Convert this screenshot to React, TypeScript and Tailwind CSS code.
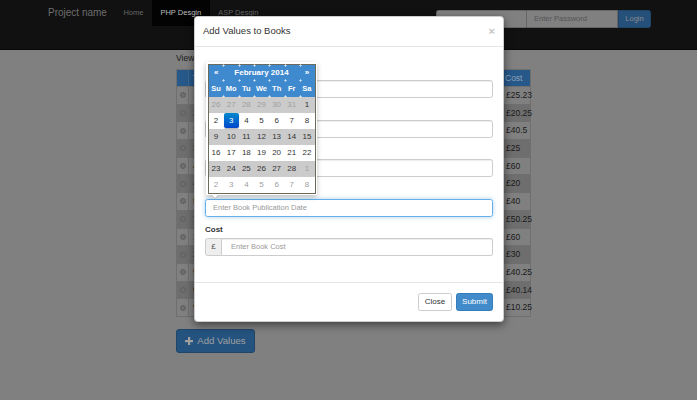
import { Fragment } from 'react'

const costs = ['£25.23', '£20.25', '£40.5', '£25', '£60', '£20', '£40', '£50.25', '£60', '£30', '£40.25', '£40.14', '£10.25']
const ids = ['1', '2', '3', '3', '4', '4', '5', '7', '1', '2', '9', '9', '9']

const dows = ['Su', 'Mo', 'Tu', 'We', 'Th', 'Fr', 'Sa']

// muted = day outside February
const weeks: [number, boolean][][] = [
    [[26, true], [27, true], [28, true], [29, true], [30, true], [31, true], [1, false]],
    [[2, false], [3, false], [4, false], [5, false], [6, false], [7, false], [8, false]],
    [[9, false], [10, false], [11, false], [12, false], [13, false], [14, false], [15, false]],
    [[16, false], [17, false], [18, false], [19, false], [20, false], [21, false], [22, false]],
    [[23, false], [24, false], [25, false], [26, false], [27, false], [28, false], [1, true]],
    [[2, true], [3, true], [4, true], [5, true], [6, true], [7, true], [8, true]],
]

const fields = [
    { label: 'Title', placeholder: 'Enter Book Title' },
    { label: 'Author', placeholder: 'Enter Author Name' },
    { label: 'Genre', placeholder: 'Enter Book Genre' },
    { label: 'Published', placeholder: 'Enter Book Publication Date', focus: true },
]

function PlusGlyph() {
    return (
        <svg width="8" height="8" viewBox="0 0 8 8" className="shrink-0">
            <rect x="3" y="0" width="2.2" height="8" fill="currentColor" />
            <rect x="0" y="3" width="8" height="2.2" fill="currentColor" />
        </svg>
    )
}

function Ticks({ top }: { top: number }) {
    // faint marks where the header cells meet
    return (
        <div className="absolute left-0 right-0 pointer-events-none" style={{ top }}>
            {[1, 2, 3, 4, 5, 6].map(i => (
                <span key={i} className="absolute w-[3px] h-[3px]" style={{ left: i * 15.3 - 1.5 }}>
                    <span className="absolute left-[1px] top-0 w-px h-[3px] bg-white/50" />
                    <span className="absolute left-0 top-[1px] w-[3px] h-px bg-white/50" />
                </span>
            ))}
        </div>
    )
}

function DatePicker() {
    return (
        <div className="absolute left-[206px] top-[62px] bg-white p-[1.5px] shadow-[0_2px_5px_rgba(0,0,0,0.25)]">
            <div className="relative w-[108px] border border-[#6c6a5c] bg-white">
                <div className="relative bg-[#3f89cf] text-white font-bold">
                    <div className="flex items-center h-[16px] text-[8px]">
                        <span className="w-[15.3px] text-center">«</span>
                        <span className="flex-1 text-center">February 2014</span>
                        <span className="w-[15.3px] text-center">»</span>
                    </div>
                    <div className="grid grid-cols-7 h-[16px] items-center text-[7.5px]">
                        {dows.map(d => (
                            <span key={d} className="text-center">{d}</span>
                        ))}
                    </div>
                    <Ticks top={-1} />
                    <Ticks top={14.5} />
                    <Ticks top={30} />
                </div>
                {weeks.map((w, wi) => (
                    <div key={wi} className={`grid grid-cols-7 h-[16px] items-center text-[8px] ${wi % 2 === 0 ? 'bg-[#cbcbcb]' : 'bg-white'}`}>
                        {w.map(([d, muted], di) => (
                            <span key={di} className="flex justify-center">
                                {wi === 1 && d === 3 ? (
                                    <span className="w-[16px] h-[15px] leading-[15px] text-center rounded-[2px] text-white bg-gradient-to-b from-[#0088cc] to-[#0044cc] shadow-[0_1px_1px_rgba(0,0,0,0.3)]">
                                        {d}
                                    </span>
                                ) : (
                                    <span className={muted ? 'text-[#a0a0a0]' : 'text-[#333]'}>{d}</span>
                                )}
                            </span>
                        ))}
                    </div>
                ))}
            </div>
            {/* caret pointing at the date input */}
            <span className="absolute left-[5px] -bottom-[4px] w-0 h-0 border-x-[4px] border-x-transparent border-t-[4px] border-t-[#bbb]" />
            <span className="absolute left-[6px] -bottom-[3px] w-0 h-0 border-x-[3px] border-x-transparent border-t-[3px] border-t-white" />
        </div>
    )
}

export default function App() {
    // page behind the modal is painted in its dimmed (backdrop) colours
    return (
        <div className="relative w-[697px] h-[400px] overflow-hidden bg-[#808080] font-['Liberation_Sans',Arial,sans-serif] text-[#1a1a1a]">
            {/* Navbar */}
            <nav className="h-[50px] bg-[#111] border-b border-[#080808] flex items-start pl-[40px] pr-[46px]">
                <span className="h-[26px] leading-[26px] px-[8px] text-[10px] text-[#6e6e6e]">Project name</span>
                <span className="h-[26px] leading-[26px] px-[8.5px] text-[7.5px] text-[#666]">Home</span>
                <span className="h-[26px] leading-[26px] px-[8.5px] text-[7.5px] text-[#bdbdbd] bg-[#030303]">PHP Desgin</span>
                <span className="h-[26px] leading-[26px] px-[8.5px] text-[7.5px] text-[#666]">ASP Desgin</span>
                <div className="ml-auto mt-[10px] flex h-[18px]">
                    <div className="w-[91px] bg-[#808080] border border-[#666] rounded-l-[2.5px] px-[7px] text-[7.5px] leading-[16px] text-[#555]">Enter Email</div>
                    <div className="w-[91px] bg-[#808080] border border-[#666] border-l-0 px-[7px] text-[7.5px] leading-[16px] text-[#555]">Enter Password</div>
                    <div className="w-[33px] bg-[#24507a] border border-[#1f4569] rounded-r-[2.5px] text-[#8c8c8c] text-[7.5px] leading-[16px] text-center">Login</div>
                </div>
            </nav>

            {/* Page content */}
            <div className="pl-[176px] pt-[2px]">
                <p className="h-[12px] leading-[12px] text-[8.5px] mb-[5px]">View Books</p>
                <div className="w-[355px] border border-[#6f6f6f] text-[8.5px]">
                    <div className="flex h-[16px] bg-[#26588a] text-[#8fa3b8] font-bold">
                        <span className="w-[12px] border-r border-[#3c6890]" />
                        <span className="flex-1 px-[4px] leading-[16px]">Title</span>
                        <span className="w-[28px] px-[3px] leading-[16px] font-normal">Cost</span>
                    </div>
                    {costs.map((c, i) => (
                        <div key={i} className={`flex h-[17.7px] border-t border-[#6f6f6f] ${i % 2 === 0 ? 'bg-[#808080]' : 'bg-[#6e6e6e]'}`}>
                            <span className="w-[12px] border-r border-[#6f6f6f] flex items-center justify-center">
                                <span className="w-[6px] h-[6px] rounded-full bg-[#6e6e6e] border border-[#5e5e5e]" />
                            </span>
                            <span className="flex-1 px-[4px] leading-[17px]">{ids[i]}0 Book</span>
                            <span className="w-[28px] px-[3px] leading-[17px] border-l border-[#6f6f6f]">{c}</span>
                        </div>
                    ))}
                </div>
                <button className="mt-[12px] w-[79px] h-[24px] flex items-center justify-center gap-[4px] bg-[#24537f] border border-[#1f4569] rounded-[3px] text-[#a0a0a0] text-[9.6px]">
                    <PlusGlyph />
                    Add Values
                </button>
            </div>

            {/* Modal */}
            <div className="absolute left-[194px] top-[16px] w-[310px] bg-white rounded-[4px] border border-black/20 shadow-[0_3px_9px_rgba(0,0,0,0.5)] text-[#333]">
                <div className="h-[30px] px-[8px] flex items-center justify-between border-b border-[#e5e5e5]">
                    <span className="text-[9.5px] text-[#333]">Add Values to Books</span>
                    <span className="text-[11px] font-bold text-[#c5c5c5] leading-none">×</span>
                </div>
                <div className="px-[10px] pt-[19px] pb-[26px]">
                    {fields.map(f => (
                        <Fragment key={f.label}>
                            <div className="mb-[7.6px]">
                                <label className="block h-[11px] leading-[11px] text-[8px] font-bold mb-[3px] pl-[4px]">{f.label}</label>
                                <div
                                    className={`h-[18px] w-[288px] rounded-[2.5px] border px-[7px] text-[7.5px] leading-[16px] text-[#999] ${
                                        f.focus
                                            ? 'border-[#66afe9] shadow-[0_0_4px_rgba(102,175,233,0.6)]'
                                            : 'border-[#ccc] shadow-[inset_0_1px_1px_rgba(0,0,0,0.075)]'
                                    }`}
                                >
                                    {f.focus ? f.placeholder : ''}
                                </div>
                            </div>
                        </Fragment>
                    ))}
                    <div>
                        <label className="block h-[11px] leading-[11px] text-[8px] font-bold mb-[3px]">Cost</label>
                        <div className="flex h-[18px] w-[288px]">
                            <span className="w-[17px] bg-[#eee] border border-[#ccc] rounded-l-[2.5px] text-[8px] leading-[16px] text-center text-[#555]">£</span>
                            <div className="flex-1 border border-l-0 border-[#ccc] rounded-r-[2.5px] px-[9px] text-[7.5px] leading-[16px] text-[#999] shadow-[inset_0_1px_1px_rgba(0,0,0,0.075)]">
                                Enter Book Cost
                            </div>
                        </div>
                    </div>
                </div>
                <div className="border-t border-[#e5e5e5] px-[10px] pt-[10px] pb-[10px] flex justify-end gap-[4px]">
                    <button className="w-[34px] h-[18px] bg-white border border-[#ccc] rounded-[2.5px] text-[8px] text-[#333]">Close</button>
                    <button className="w-[37px] h-[18px] bg-[#428bca] border border-[#357ebd] rounded-[2.5px] text-[8px] text-white">Submit</button>
                </div>
            </div>

            <DatePicker />
        </div>
    )
}
